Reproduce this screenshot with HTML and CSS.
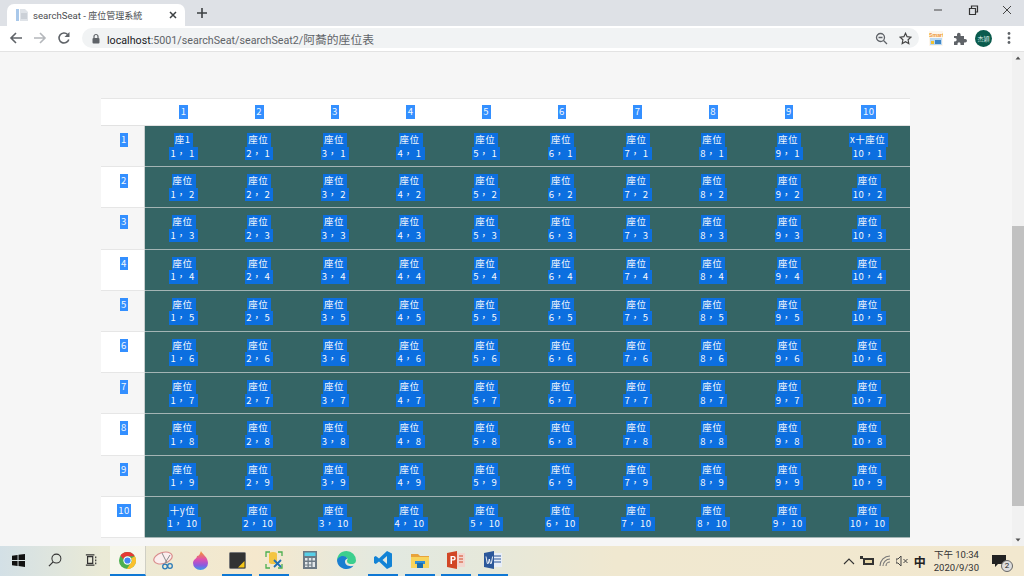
FILE: index.html
```html
<!DOCTYPE html>
<html lang="zh-Hant">
<head>
<meta charset="utf-8">
<title>searchSeat - 座位管理系統</title>
<link rel="stylesheet" href="styles.css">
</head>
<body>
<div class="tabstrip">
  <div class="tab">
    <svg class="favicon" width="14" height="14" viewBox="0 0 14 14"><path d="M1 1h3v12H1z" fill="#a9c8ea"/><path d="M5 1h5l3 3v9H5z" fill="#dfe3e8"/><path d="M6 6h6M6 8h6M6 10h6" stroke="#b8bec6"/></svg>
    <span class="tab-title">searchSeat - <span class="tab-cjk">座位管理系統</span></span>
    <svg class="tab-close" width="10" height="10" viewBox="0 0 10 10"><path d="M2 2l6 6M8 2l-6 6" stroke="#3c4043" stroke-width="1.5"/></svg>
  </div>
  <svg class="newtab" width="12" height="12" viewBox="0 0 12 12"><path d="M6 1v10M1 6h10" stroke="#3c4043" stroke-width="1.6"/></svg>
  <div class="winctl">
    <svg width="12" height="12" viewBox="0 0 12 12"><path d="M2 6h8" stroke="#444" stroke-width="1"/></svg>
    <svg width="12" height="12" viewBox="0 0 12 12"><path d="M2.500 4.500h6v6h-6zM4.500 4.500v-2.500h6v6h-2" fill="none" stroke="#333" stroke-width="1.200"/></svg>
    <svg width="12" height="12" viewBox="0 0 12 12"><path d="M2 2l8 8M10 2l-8 8" stroke="#444" stroke-width="1"/></svg>
  </div>
</div>
<div class="toolbar">
  <svg class="navicon" width="14" height="14" viewBox="0 0 14 14"><path d="M13 7H2M7 2L2 7l5 5" fill="none" stroke="#5f6368" stroke-width="1.6"/></svg>
  <svg class="navicon" width="14" height="14" viewBox="0 0 14 14"><path d="M1 7h11M7 2l5 5-5 5" fill="none" stroke="#b4b7bb" stroke-width="1.6"/></svg>
  <svg class="navicon" width="14" height="14" viewBox="0 0 14 14"><path d="M11.800 8.500A5 5 0 1 1 10.600 3.500" fill="none" stroke="#5f6368" stroke-width="1.600"/><path d="M12.500 1v5h-5z" fill="#5f6368"/></svg>
  <div class="omnibox">
    <svg class="lock" width="10" height="11" viewBox="0 0 10 11"><path d="M3 5V3.500a2 2 0 0 1 4 0V5" fill="none" stroke="#5f6368" stroke-width="1.200"/><rect x="1.500" y="5" width="7" height="5.500" rx="1" fill="#5f6368"/></svg>
    <span class="url"><span class="host">localhost</span>:5001/searchSeat/searchSeat2/<span class="url-cjk">阿蕎的座位表</span></span>
    <svg class="omni-zoom" width="13" height="13" viewBox="0 0 13 13"><circle cx="5.500" cy="5.500" r="4" fill="none" stroke="#5f6368" stroke-width="1.300"/><path d="M8.500 8.500L12 12M3.500 5.500h4" stroke="#5f6368" stroke-width="1.300"/></svg>
    <svg width="13" height="13" viewBox="0 0 13 13"><path d="M6.500 1.300l1.600 3.400 3.700.5-2.700 2.600.7 3.700-3.300-1.800-3.300 1.800.7-3.700L1.200 5.200l3.700-.5z" fill="none" stroke="#444" stroke-width="1.200"/></svg>
  </div>
  <div class="ext-smart"><svg width="14" height="15" viewBox="0 0 14 15"><rect width="14" height="15" fill="#fdf6ec"/><text x="0" y="5.500" font-size="5.500" font-weight="700" font-family="Roboto" fill="#ef9a3c">Smart</text><rect x="1" y="7" width="12" height="7" fill="#bcd9f2"/><rect x="2" y="10" width="3" height="3" fill="#f1c232"/><rect x="6" y="9" width="6" height="4" fill="#3d85c6"/></svg></div>
  <svg class="ext-puzzle" width="14" height="14" viewBox="0 0 14 14"><path d="M1 5h3V3.500a1.800 1.800 0 0 1 3.600 0V5h3.400v3h1.200a1.800 1.800 0 0 1 0 3.600H11V14H7.500v-1.200a1.500 1.500 0 0 0-3 0V14H1v-3.500h1a1.700 1.700 0 0 0 0-3.400H1z" fill="#5f6368"/></svg>
  <div class="avatar">杰穎</div>
  <svg class="dots" width="4" height="14" viewBox="0 0 4 14"><circle cx="2" cy="2.500" r="1.400" fill="#5f6368"/><circle cx="2" cy="7" r="1.400" fill="#5f6368"/><circle cx="2" cy="11.500" r="1.400" fill="#5f6368"/></svg>
</div>
<div class="viewport">
  <main class="page">
    <div class="seats">
      <div class="th corner"></div>
      <div class="th"><span class="hl">1</span></div><div class="th"><span class="hl">2</span></div><div class="th"><span class="hl">3</span></div><div class="th"><span class="hl">4</span></div><div class="th"><span class="hl">5</span></div><div class="th"><span class="hl">6</span></div><div class="th"><span class="hl">7</span></div><div class="th"><span class="hl">8</span></div><div class="th"><span class="hl">9</span></div><div class="th"><span class="hl">10</span></div>

      <div class="rh odd"><span class="hl">1</span></div>
      <div class="cell"><span class="sel">座1</span><span class="sel">1， 1</span></div><div class="cell"><span class="sel">座位</span><span class="sel">2， 1</span></div><div class="cell"><span class="sel">座位</span><span class="sel">3， 1</span></div><div class="cell"><span class="sel">座位</span><span class="sel">4， 1</span></div><div class="cell"><span class="sel">座位</span><span class="sel">5， 1</span></div><div class="cell"><span class="sel">座位</span><span class="sel">6， 1</span></div><div class="cell"><span class="sel">座位</span><span class="sel">7， 1</span></div><div class="cell"><span class="sel">座位</span><span class="sel">8， 1</span></div><div class="cell"><span class="sel">座位</span><span class="sel">9， 1</span></div><div class="cell"><span class="sel">x十座位</span><span class="sel">10， 1</span></div>

      <div class="rh"><span class="hl">2</span></div>
      <div class="cell"><span class="sel">座位</span><span class="sel">1， 2</span></div><div class="cell"><span class="sel">座位</span><span class="sel">2， 2</span></div><div class="cell"><span class="sel">座位</span><span class="sel">3， 2</span></div><div class="cell"><span class="sel">座位</span><span class="sel">4， 2</span></div><div class="cell"><span class="sel">座位</span><span class="sel">5， 2</span></div><div class="cell"><span class="sel">座位</span><span class="sel">6， 2</span></div><div class="cell"><span class="sel">座位</span><span class="sel">7， 2</span></div><div class="cell"><span class="sel">座位</span><span class="sel">8， 2</span></div><div class="cell"><span class="sel">座位</span><span class="sel">9， 2</span></div><div class="cell"><span class="sel">座位</span><span class="sel">10， 2</span></div>

      <div class="rh odd"><span class="hl">3</span></div>
      <div class="cell"><span class="sel">座位</span><span class="sel">1， 3</span></div><div class="cell"><span class="sel">座位</span><span class="sel">2， 3</span></div><div class="cell"><span class="sel">座位</span><span class="sel">3， 3</span></div><div class="cell"><span class="sel">座位</span><span class="sel">4， 3</span></div><div class="cell"><span class="sel">座位</span><span class="sel">5， 3</span></div><div class="cell"><span class="sel">座位</span><span class="sel">6， 3</span></div><div class="cell"><span class="sel">座位</span><span class="sel">7， 3</span></div><div class="cell"><span class="sel">座位</span><span class="sel">8， 3</span></div><div class="cell"><span class="sel">座位</span><span class="sel">9， 3</span></div><div class="cell"><span class="sel">座位</span><span class="sel">10， 3</span></div>

      <div class="rh"><span class="hl">4</span></div>
      <div class="cell"><span class="sel">座位</span><span class="sel">1， 4</span></div><div class="cell"><span class="sel">座位</span><span class="sel">2， 4</span></div><div class="cell"><span class="sel">座位</span><span class="sel">3， 4</span></div><div class="cell"><span class="sel">座位</span><span class="sel">4， 4</span></div><div class="cell"><span class="sel">座位</span><span class="sel">5， 4</span></div><div class="cell"><span class="sel">座位</span><span class="sel">6， 4</span></div><div class="cell"><span class="sel">座位</span><span class="sel">7， 4</span></div><div class="cell"><span class="sel">座位</span><span class="sel">8， 4</span></div><div class="cell"><span class="sel">座位</span><span class="sel">9， 4</span></div><div class="cell"><span class="sel">座位</span><span class="sel">10， 4</span></div>

      <div class="rh odd"><span class="hl">5</span></div>
      <div class="cell"><span class="sel">座位</span><span class="sel">1， 5</span></div><div class="cell"><span class="sel">座位</span><span class="sel">2， 5</span></div><div class="cell"><span class="sel">座位</span><span class="sel">3， 5</span></div><div class="cell"><span class="sel">座位</span><span class="sel">4， 5</span></div><div class="cell"><span class="sel">座位</span><span class="sel">5， 5</span></div><div class="cell"><span class="sel">座位</span><span class="sel">6， 5</span></div><div class="cell"><span class="sel">座位</span><span class="sel">7， 5</span></div><div class="cell"><span class="sel">座位</span><span class="sel">8， 5</span></div><div class="cell"><span class="sel">座位</span><span class="sel">9， 5</span></div><div class="cell"><span class="sel">座位</span><span class="sel">10， 5</span></div>

      <div class="rh"><span class="hl">6</span></div>
      <div class="cell"><span class="sel">座位</span><span class="sel">1， 6</span></div><div class="cell"><span class="sel">座位</span><span class="sel">2， 6</span></div><div class="cell"><span class="sel">座位</span><span class="sel">3， 6</span></div><div class="cell"><span class="sel">座位</span><span class="sel">4， 6</span></div><div class="cell"><span class="sel">座位</span><span class="sel">5， 6</span></div><div class="cell"><span class="sel">座位</span><span class="sel">6， 6</span></div><div class="cell"><span class="sel">座位</span><span class="sel">7， 6</span></div><div class="cell"><span class="sel">座位</span><span class="sel">8， 6</span></div><div class="cell"><span class="sel">座位</span><span class="sel">9， 6</span></div><div class="cell"><span class="sel">座位</span><span class="sel">10， 6</span></div>

      <div class="rh odd"><span class="hl">7</span></div>
      <div class="cell"><span class="sel">座位</span><span class="sel">1， 7</span></div><div class="cell"><span class="sel">座位</span><span class="sel">2， 7</span></div><div class="cell"><span class="sel">座位</span><span class="sel">3， 7</span></div><div class="cell"><span class="sel">座位</span><span class="sel">4， 7</span></div><div class="cell"><span class="sel">座位</span><span class="sel">5， 7</span></div><div class="cell"><span class="sel">座位</span><span class="sel">6， 7</span></div><div class="cell"><span class="sel">座位</span><span class="sel">7， 7</span></div><div class="cell"><span class="sel">座位</span><span class="sel">8， 7</span></div><div class="cell"><span class="sel">座位</span><span class="sel">9， 7</span></div><div class="cell"><span class="sel">座位</span><span class="sel">10， 7</span></div>

      <div class="rh"><span class="hl">8</span></div>
      <div class="cell"><span class="sel">座位</span><span class="sel">1， 8</span></div><div class="cell"><span class="sel">座位</span><span class="sel">2， 8</span></div><div class="cell"><span class="sel">座位</span><span class="sel">3， 8</span></div><div class="cell"><span class="sel">座位</span><span class="sel">4， 8</span></div><div class="cell"><span class="sel">座位</span><span class="sel">5， 8</span></div><div class="cell"><span class="sel">座位</span><span class="sel">6， 8</span></div><div class="cell"><span class="sel">座位</span><span class="sel">7， 8</span></div><div class="cell"><span class="sel">座位</span><span class="sel">8， 8</span></div><div class="cell"><span class="sel">座位</span><span class="sel">9， 8</span></div><div class="cell"><span class="sel">座位</span><span class="sel">10， 8</span></div>

      <div class="rh odd"><span class="hl">9</span></div>
      <div class="cell"><span class="sel">座位</span><span class="sel">1， 9</span></div><div class="cell"><span class="sel">座位</span><span class="sel">2， 9</span></div><div class="cell"><span class="sel">座位</span><span class="sel">3， 9</span></div><div class="cell"><span class="sel">座位</span><span class="sel">4， 9</span></div><div class="cell"><span class="sel">座位</span><span class="sel">5， 9</span></div><div class="cell"><span class="sel">座位</span><span class="sel">6， 9</span></div><div class="cell"><span class="sel">座位</span><span class="sel">7， 9</span></div><div class="cell"><span class="sel">座位</span><span class="sel">8， 9</span></div><div class="cell"><span class="sel">座位</span><span class="sel">9， 9</span></div><div class="cell"><span class="sel">座位</span><span class="sel">10， 9</span></div>

      <div class="rh"><span class="hl">10</span></div>
      <div class="cell"><span class="sel">十y位</span><span class="sel">1， 10</span></div><div class="cell"><span class="sel">座位</span><span class="sel">2， 10</span></div><div class="cell"><span class="sel">座位</span><span class="sel">3， 10</span></div><div class="cell"><span class="sel">座位</span><span class="sel">4， 10</span></div><div class="cell"><span class="sel">座位</span><span class="sel">5， 10</span></div><div class="cell"><span class="sel">座位</span><span class="sel">6， 10</span></div><div class="cell"><span class="sel">座位</span><span class="sel">7， 10</span></div><div class="cell"><span class="sel">座位</span><span class="sel">8， 10</span></div><div class="cell"><span class="sel">座位</span><span class="sel">9， 10</span></div><div class="cell"><span class="sel">座位</span><span class="sel">10， 10</span></div>
    </div>
  </main>
  <div class="scrollbar">
    <svg width="12" height="12" viewBox="0 0 12 12"><path d="M3.500 7.500L6 4.500l2.500 3z" fill="#505050"/></svg>
    <div class="track"><div class="thumb"></div></div>
    <svg width="12" height="12" viewBox="0 0 12 12"><path d="M3.500 4.500L6 7.500l2.500-3z" fill="#505050"/></svg>
  </div>
</div>
<footer class="taskbar">
  <div class="tb-item"><svg width="13" height="13" viewBox="0 0 14 14"><path d="M0 2l6-1v5.500H0zM7 .9L14 0v6.500H7zM0 7.500h6V13l-6-1zM7 7.500h7V14l-7-1z" fill="#111"/></svg></div>
  <div class="tb-item"><svg width="14" height="14" viewBox="0 0 15 15"><circle cx="9" cy="6" r="4.800" fill="none" stroke="#333" stroke-width="1.100"/><path d="M5.500 9.500L1 14" stroke="#333" stroke-width="1.300"/></svg></div>
  <div class="tb-item"><svg width="12" height="12" viewBox="0 0 14 14"><path d="M3 3h6v8H3zM1 1h10M1 13h10M12.500 3v2M12.500 6.500v2M12.500 10v2" fill="none" stroke="#333" stroke-width="1.400"/></svg></div>
  <div class="tb-item active wide"><svg width="17" height="17" viewBox="0 0 18 18"><circle cx="9" cy="9" r="9" fill="#4caf50"/><path d="M9 0a9 9 0 0 1 7.800 4.500H9a4.500 4.500 0 0 0-4.300 3.200L1.500 3.700A9 9 0 0 1 9 0z" fill="#e53935"/><path d="M16.800 4.500A9 9 0 0 1 8.300 18l3.600-5.500a4.500 4.500 0 0 0 .9-6z" fill="#fbc02d"/><circle cx="9" cy="9" r="4.400" fill="#fff"/><circle cx="9" cy="9" r="3.300" fill="#4285f4"/></svg></div>
  <div class="tb-item"><svg width="23" height="19" viewBox="0 0 23 19"><ellipse cx="10" cy="7" rx="9.500" ry="5.500" transform="rotate(-18 10 7)" fill="#fbeeee" stroke="#d98b8b" stroke-width="1.200"/><path d="M9 2l5 10M17 4l-5 8" stroke="#8a8a8a" stroke-width="1"/><circle cx="12" cy="15.500" r="2.300" fill="none" stroke="#2a7ab8" stroke-width="1.300"/><circle cx="17" cy="15" r="2.300" fill="none" stroke="#2a7ab8" stroke-width="1.300"/></svg></div>
  <div class="tb-item"><svg width="15" height="19" viewBox="0 0 15 19"><defs><linearGradient id="drop" x1="0" y1="0" x2="0" y2="1"><stop offset="0" stop-color="#f59a2a"/><stop offset=".45" stop-color="#dc4fb0"/><stop offset=".75" stop-color="#8a5ae0"/><stop offset="1" stop-color="#38a0e8"/></linearGradient></defs><path d="M8 0c1 3 7 6 7 12a7.500 7 0 0 1-15 0C0 8 4 8 4 5c2 0 3-2 4-5z" fill="url(#drop)"/></svg></div>
  <div class="tb-item on"><svg width="17" height="17" viewBox="0 0 17 17"><rect x=".5" y=".5" width="16" height="16" rx="1" fill="#333" stroke="#777"/><path d="M15.500 9v6.500H9z" fill="#f5c518"/></svg></div>
  <div class="tb-item on"><svg width="18" height="18" viewBox="0 0 18 18"><path d="M4 3a4 2 0 0 1 8 0v8a4 2 0 0 1-8 0z" fill="#f4c542"/><path d="M1 6V1h4M13 1h4v4M1 13v4h4M13 17h4v-4" fill="none" stroke="#4caf50" stroke-width="1.300"/><path d="M9 9l7 7M16 9l-7 7" stroke="#1f6fb5" stroke-width="1.800"/></svg></div>
  <div class="tb-item"><svg width="14" height="18" viewBox="0 0 14 18"><rect width="14" height="18" fill="#6d7a85"/><rect x="1.500" y="1.500" width="11" height="3.500" fill="#58d0e8"/><path d="M2 7h2.500v2.500H2zM5.800 7h2.500v2.500H5.800zM9.500 7H12v2.500H9.500zM2 11h2.500v2.500H2zM5.800 11h2.500v2.500H5.800zM9.500 11H12v5H9.500zM2 14.500h2.500V16H2zM5.800 14.500h2.500V16H5.800z" fill="#e3e7ea"/></svg></div>
  <div class="tb-item"><svg width="19" height="19" viewBox="0 0 19 19"><path d="M9.500 0a9.500 9.500 0 0 1 9.500 9.500c0 3-3 4-6 3.500-2-.4-3-1.500-3-3 0-1 .6-1.500.8-2-1-1.500-3-2.500-5-2C2.500 6.500 1 8.500 0 10 0 4 4 0 9.500 0z" fill="#3ccf8e"/><path d="M0 10c.2-2.500 3-5 6-4.900 2 .1 3.500 1 4.500 2.300-1.500.4-2.500 1.600-2.500 3.100 0 3.500 4 5.500 8.500 4.300A9.500 9.500 0 0 1 0 10z" fill="#1b7fd1"/></svg></div>
  <div class="tb-item on"><svg width="18" height="18" viewBox="0 0 18 18"><path d="M13 0l5 2.500v13L13 18 5 10.500 1.800 13 0 12V6l1.800-1L5 7.500zM13 5l-4.500 4 4.500 4z" fill="#1283d6"/></svg></div>
  <div class="tb-item on"><svg width="18" height="15" viewBox="0 0 18 15"><path d="M0 1h7l2 2h9v3H0z" fill="#e8a33c"/><rect y="4" width="18" height="11" fill="#f8d45c"/><rect x="4" y="8" width="10" height="3" fill="#2f8fd8"/><rect x="6" y="10" width="6" height="5" fill="#1c6fb0"/></svg></div>
  <div class="tb-item on"><svg width="18" height="18" viewBox="0 0 18 18"><rect x="7" y="2" width="11" height="14" fill="#f3d6cf"/><path d="M12 5h4M12 8h4M12 11h4" stroke="#d24726"/><path d="M0 2l10-2v18L0 16z" fill="#d24726"/><path d="M3.500 5h3a2 2 0 0 1 0 4.500H5V13H3.500zM5 6.300v2h1.300a1 1 0 0 0 0-2z" fill="#fff"/></svg></div>
  <div class="tb-item on"><svg width="18" height="18" viewBox="0 0 18 18"><rect x="7" y="2" width="11" height="14" fill="#e8eef8"/><path d="M10 5h7M10 8h7M10 11h7" stroke="#2b579a"/><path d="M0 2l10-2v18L0 16z" fill="#2b579a"/><path d="M2 5.500l1.300 7h1l1-4.500 1 4.500h1l1.300-7" fill="none" stroke="#fff" stroke-width=".9"/></svg></div>
  <div class="tray">
    <svg width="12" height="8" viewBox="0 0 12 8"><path d="M1 7l5-5 5 5" fill="none" stroke="#333" stroke-width="1.100"/></svg>
    <svg width="14" height="10" viewBox="0 0 14 10"><rect x="3" y="2" width="11" height="7" fill="#333"/><rect x="5" y="4" width="7" height="3" fill="#e8d8a8"/><rect y="0" width="3" height="3" fill="#333"/></svg>
    <svg width="12" height="12" viewBox="0 0 12 12"><path d="M1 11a10 10 0 0 1 10-10M4 11a7 7 0 0 1 7-7M7 11a4 4 0 0 1 4-4" fill="none" stroke="#777" stroke-width="1.100"/></svg>
    <svg width="12" height="10" viewBox="0 0 12 10"><path d="M0 3h2l3-3v10L2 7H0z" fill="none" stroke="#444"/><path d="M7.500 3l4 4M11.500 3l-4 4" stroke="#444"/></svg>
    <span class="ime">中</span>
    <div class="clock"><span>下午 10:34</span><span>2020/9/30</span></div>
    <div class="notify"><svg width="14" height="13" viewBox="0 0 14 13"><path d="M0 0h14v9H6l-3 3V9H0z" fill="#222"/></svg><span class="badge">2</span></div>
  </div>
</footer>
</body>
</html>
```
FILE: styles.css
```css
* { box-sizing: border-box; }
html, body { margin: 0; height: 100%; }
body {
  width: 1024px;
  height: 576px;
  overflow: hidden;
  display: flex;
  flex-direction: column;
  font-family: "Roboto", "Noto Sans CJK TC", sans-serif;
  background: #f6f6f6;
}
.tabstrip {
  height: 26px;
  flex: none;
  display: flex;
  align-items: flex-end;
  background: #dee1e6;
  padding-left: 7px;
}
.tab {
  width: 178px;
  height: 22px;
  background: #fff;
  border-radius: 7px 7px 0 0;
  display: flex;
  align-items: center;
  padding: 0 7px 0 8px;
}
.favicon { margin-right: 4px; flex: none; }
.tab-title {
  flex: 1;
  font-size: 9.600px;
  color: #4a4d50;
  white-space: nowrap;
}
.tab-cjk { font-size: 9px; }
.tab-close { flex: none; margin-bottom: 1px; }
.newtab { margin: 0 0 7px 11px; }
.winctl {
  margin-left: auto;
  align-self: flex-start;
  display: flex;
  gap: 22px;
  padding: 4px 11px 0 0;
}
.winctl svg:first-child { margin-right: 1px; }
.toolbar {
  height: 26px;
  flex: none;
  display: flex;
  align-items: center;
  background: #fff;
  border-bottom: 1px solid #e3e3e3;
  padding: 0 0 1px 9px;
}
.navicon { margin-right: 10px; flex: none; }
.omnibox {
  margin-left: 1px;
  width: 837px;
  height: 20px;
  border-radius: 10px;
  background: #f1f3f4;
  display: flex;
  align-items: center;
  padding: 0 7px 0 9px;
}
.lock { flex: none; margin-right: 6px; }
.url {
  flex: 1;
  font-size: 10.700px;
  color: #5f6368;
  white-space: nowrap;
}
.url-cjk { font-size: 11.800px; }
.host { color: #202124; }
.omni-zoom { margin-right: 11px; }
.ext-smart { margin-left: 10px; width: 14px; height: 15px; display: flex; }
.ext-puzzle { margin-left: 10px; }
.avatar {
  margin-left: 8px;
  width: 17px;
  height: 17px;
  border-radius: 50%;
  background: #0a5b4d;
  color: #dfeee9;
  font-size: 6px;
  display: flex;
  align-items: center;
  justify-content: center;
  white-space: nowrap;
}
.dots { margin-left: 15px; }
.viewport {
  flex: 1;
  min-height: 0;
  display: flex;
}
.page {
  flex: 1;
  padding: 46px 102px 0 101px;
  min-width: 0;
}
.seats {
  display: grid;
  grid-template-columns: 44px repeat(9, 1fr) 84px;
  grid-template-rows: 28px repeat(10, 41.2px);
  font-family: "Noto Sans CJK TC", "Noto Sans", sans-serif;
  font-size: 9.500px;
  line-height: 13.500px;
  letter-spacing: .5px;
  color: #f4f8fc;
}
.th {
  background: #fff;
  border-top: 1px solid #e6e6e6;
  border-bottom: 1px solid #e2e2e2;
  text-align: center;
  padding: 6px 0 0 1.500px;
}
.th.corner { padding: 0; }
.rh {
  background: #fff;
  border-bottom: 1px solid #e6e6e6;
  border-right: 1px solid #c9cfcf;
  padding: 7px 0 0 3px;
  text-align: center;
}
.rh.odd { background: #f6f6f6; }
.hl { background: #338fff; display: inline-block; padding: 0 1.500px; }
.cell {
  background: #356565;
  border-bottom: 1px solid #a3b4b4;
  padding: 7px 0 0 1.500px;
  display: flex;
  flex-direction: column;
  align-items: center;
}
.sel { background: #0c6fe0; white-space: pre; display: block; padding: 0 3px 0 1px; }
.scrollbar {
  width: 12px;
  flex: none;
  background: #f1f1f1;
  display: flex;
  flex-direction: column;
}
.track { flex: 1; display: flex; flex-direction: column; padding-top: 162px; padding-bottom: 28px; }
.thumb { flex: 1; background: #c1c1c1; }
.taskbar {
  height: 30px;
  flex: none;
  display: flex;
  align-items: stretch;
  background: linear-gradient(90deg, #d3e0e6 0%, #eaead6 10%, #f5e8cd 25%, #e2e9e1 38%, #e6e8da 48%, #f0e8d0 60%, #f2e8cf 100%);
}
.tb-item {
  width: 36.500px;
  display: flex;
  align-items: center;
  justify-content: center;
  position: relative;
  padding-bottom: 2px;
}
.tb-item.on::after {
  content: "";
  position: absolute;
  left: 3.250px;
  right: 3.250px;
  bottom: 0;
  height: 2px;
  background: #0f78d4;
}
.tb-item.active {
  background: rgba(255,255,255,.55);
  border-right: 1px solid #cfcfc4;
  border-bottom: 2px solid #0f78d4;
  padding-bottom: 0;
}
.tray {
  margin-left: auto;
  display: flex;
  align-items: center;
  gap: 5px;
  padding-right: 12px;
  color: #222;
}
.ime { font-family: "Noto Sans CJK TC", sans-serif; font-size: 12px; font-weight: 700; margin-left: 1px; }
.clock {
  display: flex;
  flex-direction: column;
  align-items: center;
  font-size: 9.500px;
  line-height: 13px;
  color: #333;
  margin: 0 8px 0 3px;
}
.notify { position: relative; width: 20px; height: 20px; padding-top: 2px; }
.badge {
  position: absolute;
  right: -1px;
  bottom: -1px;
  width: 12px;
  height: 12px;
  border-radius: 50%;
  border: 1px solid #666;
  background: #ddd;
  font-size: 8px;
  line-height: 10px;
  text-align: center;
}
```
